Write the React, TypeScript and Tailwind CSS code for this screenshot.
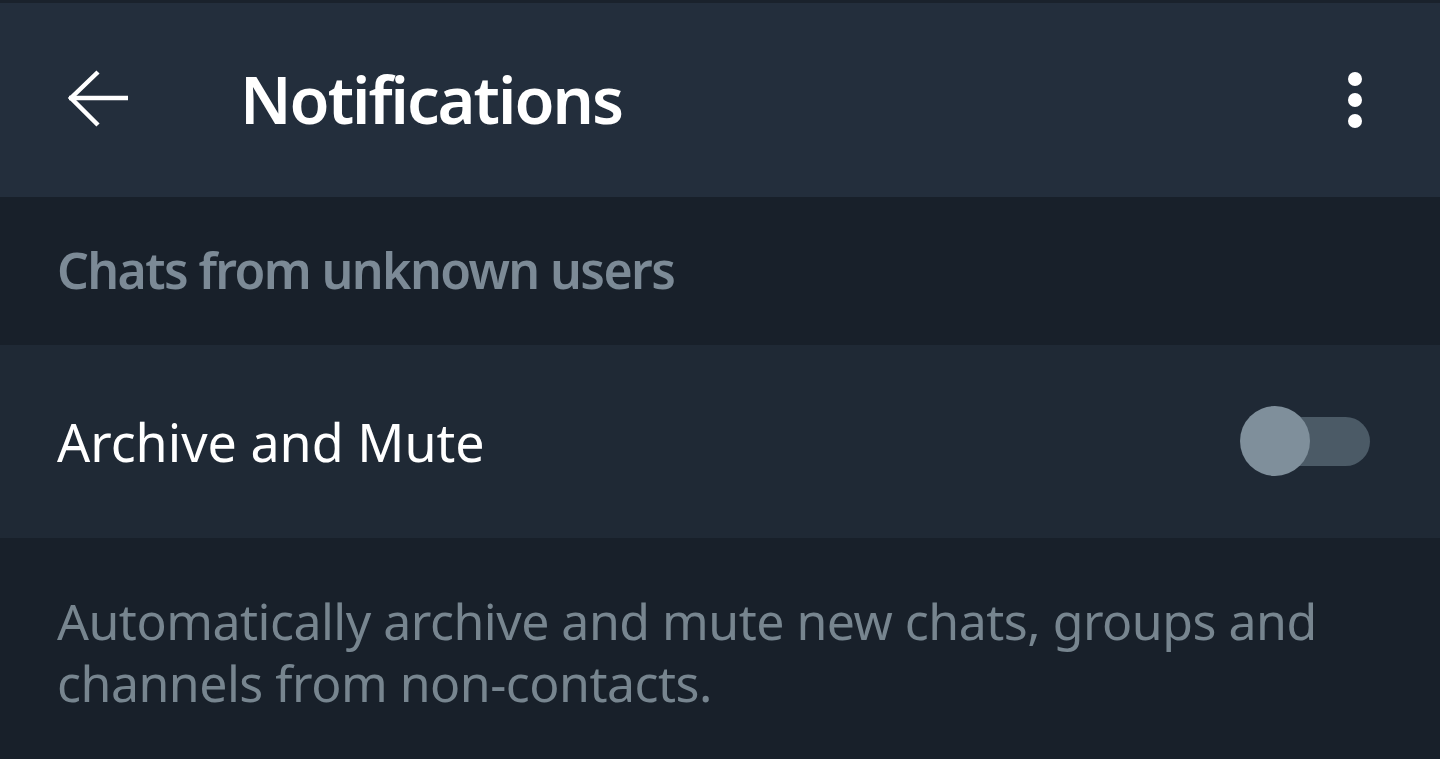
export default function App() {
  return (
    <div
      className="flex h-[759px] w-[1440px] flex-col overflow-hidden bg-[#18202a] text-white"
      style={{ fontFamily: '"Noto Sans", "Open Sans", sans-serif' }}
    >
      <div className="h-[3px] bg-[#1a222c]" />
      {/* Top bar */}
      <header className="flex h-[194px] items-center bg-[#232e3c] pl-[66px] pr-[78px]">
        <svg width="64" height="60" viewBox="0 0 64 60" fill="none" className="mt-[-2px]">
          <path d="M3 29 H62" stroke="#fff" strokeWidth="4.5" />
          <path d="M32 3 L5 29 L32 56" stroke="#fff" strokeWidth="4.5" />
        </svg>
        <h1 className="ml-[110px] text-[65px] font-semibold tracking-[-2px]">Notifications</h1>
        <div className="ml-auto flex flex-col gap-[7px]">
          <span className="h-[14px] w-[14px] rounded-full bg-white" />
          <span className="h-[14px] w-[14px] rounded-full bg-white" />
          <span className="h-[14px] w-[14px] rounded-full bg-white" />
        </div>
      </header>

      {/* Section header */}
      <div className="flex h-[148px] items-center px-[57px]">
        <h2 className="mt-[-2px] text-[50px] font-semibold tracking-[-1.6px] text-[#7c8a96]">
          Chats from unknown users
        </h2>
      </div>

      {/* Row */}
      <div className="flex h-[193px] items-center bg-[#1f2935] px-[57px]">
        <span className="text-[52px]">Archive and Mute</span>
        <div className="relative ml-auto mr-[13px] h-[49px] w-[130px] shrink-0">
          <div className="absolute right-0 top-0 h-[49px] w-[110px] rounded-full bg-[#4b5a66]" />
          <div className="absolute left-0 top-[-11px] h-[70px] w-[70px] rounded-full bg-[#7f8f9b]" />
        </div>
      </div>

      {/* Description */}
      <p className="px-[57px] pt-[52px] text-[50px] leading-[62px] tracking-[-0.5px] text-[#77858f]">
        Automatically archive and mute new chats, groups and channels from non-contacts.
      </p>
    </div>
  );
}
